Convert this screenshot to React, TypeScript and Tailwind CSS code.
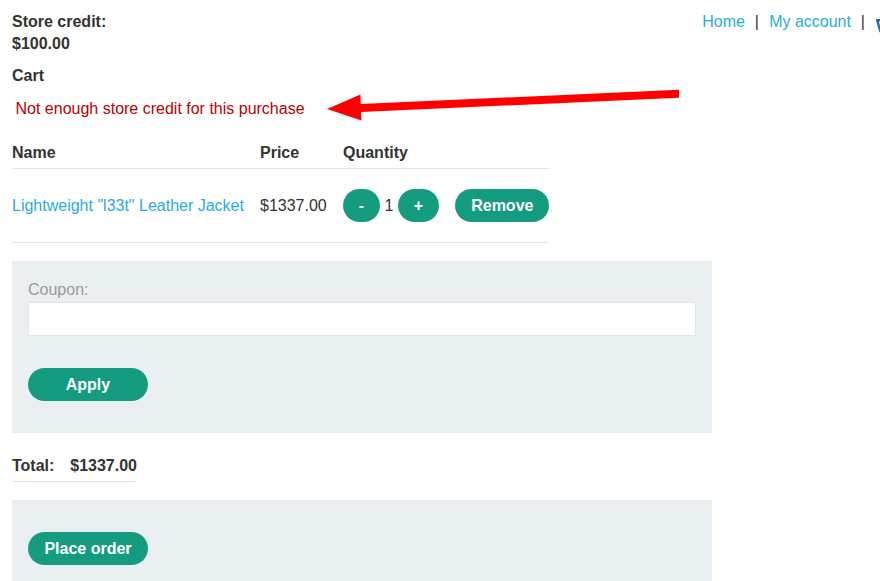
import type { ReactNode } from "react";

function Pill({ children, className = "" }: { children: ReactNode; className?: string }) {
  return (
    <button className={`h-[33px] rounded-full bg-[#159c80] pt-px font-bold text-white ${className}`}>{children}</button>
  );
}

export default function App() {
  return (
    <div className="relative h-[581px] w-[880px] overflow-hidden bg-white pl-3 font-['Liberation_Sans',Arial,sans-serif] text-base leading-[22px] text-[#333332]">
      <header className="flex justify-between pt-[11px]">
        <div className="font-bold">
          <p>Store credit:</p>
          <p>$100.00</p>
        </div>
        <nav className="flex w-[177.700px] shrink-0 whitespace-nowrap text-[#29abe2]">
          <a>Home</a>
          <span className="ml-[9.700px] mr-[10.300px] text-[#333332]">|</span>
          <a>My account</a>
          <span className="ml-[9.700px] mr-[10.300px] text-[#333332]">|</span>
          <svg className="ml-[1px] mt-[8px] h-4 w-4 shrink-0" viewBox="0 0 16 16" fill="none" stroke="#2d6cb5" strokeWidth="2.400">
            <path d="M0 1.200h16M1.200 1l3 11h12" />
          </svg>
        </nav>
      </header>
      <h1 className="mt-[10px] font-bold">Cart</h1>
      <p className="mt-[11px] pl-[3.500px] text-[#bb0000]">Not enough store credit for this purchase</p>
      <svg className="absolute left-[320px] top-[80px]" width="370" height="50">
        <path d="M7 29L40.500 14.500L40.800 24L359 9.800V17.800L41 32L41.500 40.500Z" fill="#f00" />
      </svg>
      <table className="mt-[22px] w-[537px] table-fixed border-collapse text-left">
        <colgroup>
          <col className="w-[248px]" /><col className="w-[83px]" /><col className="w-[112px]" /><col className="w-[94px]" />
        </colgroup>
        <thead>
          <tr className="h-[26px] border-b border-[#e4e4e4] align-top">
            <th>Name</th><th>Price</th><th>Quantity</th><th />
          </tr>
        </thead>
        <tbody>
          <tr className="h-[74px] border-b border-[#e4e4e4]">
            <td className="whitespace-nowrap pt-px text-[#29abe2]">Lightweight "l33t" Leather Jacket</td>
            <td className="pt-px">$1337.00</td>
            <td>
              <div className="flex items-center">
                <Pill className="w-[37px]">-</Pill>
                <span className="w-[18px] pt-px text-center">1</span>
                <Pill className="w-[41px]">+</Pill>
              </div>
            </td>
            <td><Pill className="block w-[94px] pl-[0.600px]">Remove</Pill></td>
          </tr>
        </tbody>
      </table>
      <form className="mt-[18px] h-[172px] w-[700px] bg-[#eaeff2] px-4 pt-[18px]">
        <label className="block text-[#999]">Coupon:</label>
        <input className="mt-px block h-[34px] w-full border border-[#e4e4e4] bg-white" />
        <Pill className="mt-8 w-[120px]">Apply</Pill>
      </form>
      <div className="mt-[22px] flex h-[27px] w-[125px] justify-between border-b border-[#e4e4e4] font-bold">
        <span>Total:</span><span>$1337.00</span>
      </div>
      <form className="mt-[18px] h-[81px] w-[700px] bg-[#eaeff2] px-4 pt-8">
        <Pill className="w-[120px]">Place order</Pill>
      </form>
    </div>
  );
}
